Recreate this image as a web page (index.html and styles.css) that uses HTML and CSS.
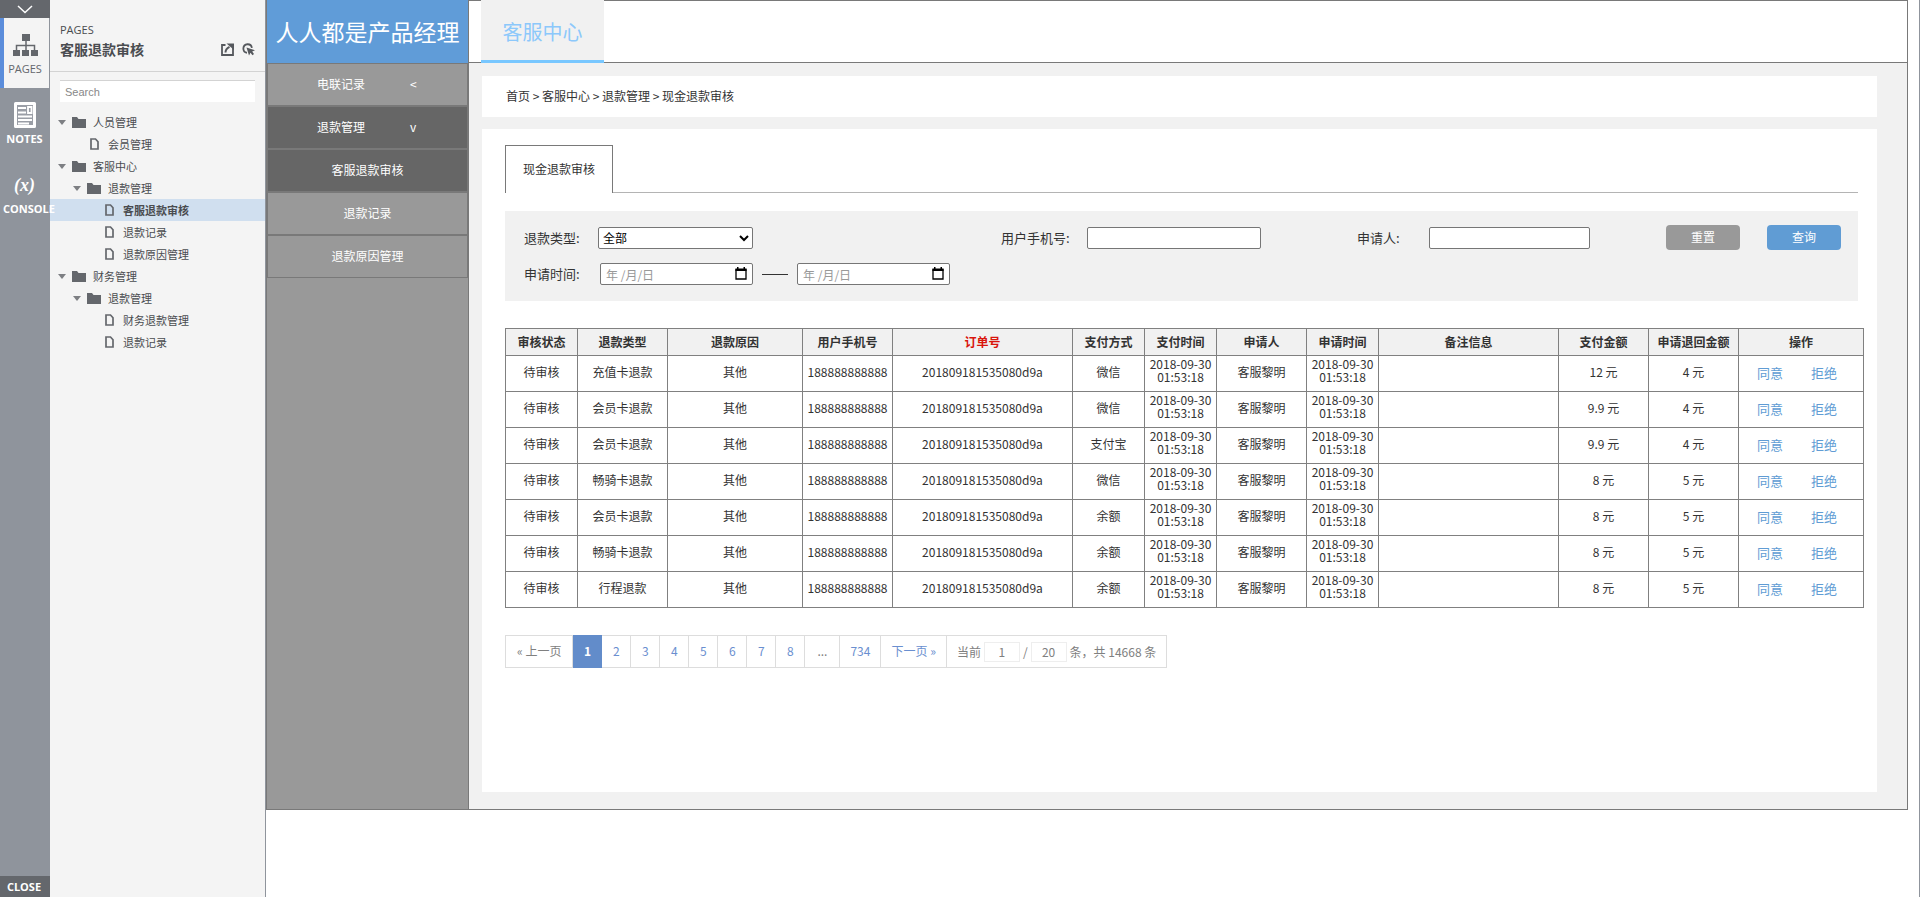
FILE: index.html
```html
<!DOCTYPE html>
<html lang="zh-CN">
<head>
    <meta charset="UTF-8">
    <meta name="viewport" content="width=device-width, initial-scale=1.0">
    <title>客服退款审核</title>
    <link rel="stylesheet" href="styles.css">
</head>
<body>
    <!-- shared icons -->
    <svg class="defs" width="0" height="0">
        <symbol id="i-arrow" viewBox="0 0 8 5"><path d="M0 0h8L4 5z" fill="#7d7f83"/></symbol>
        <symbol id="i-folder" viewBox="0 0 14 11"><path d="M0 0h5l1.500 2H14v9H0z" fill="#64676c"/></symbol>
        <symbol id="i-page" viewBox="0 0 9 12"><path d="M1 1h4.500L8 3.800V11H1z" fill="none" stroke="#64676c" stroke-width="1.700"/></symbol>
        <symbol id="i-calendar" viewBox="0 0 12 13"><path d="M1 3h10v9H1z" fill="none" stroke="#000" stroke-width="1.300"/><path d="M.4 1.500h11.200V4H.4zM2 0h1.500v2H2zM8.500 0H10v2H8.500z"/></symbol>
    </svg>

    <div class="player">
        <nav class="rail">
            <button class="rail-toggle" aria-label="Toggle">
                <svg width="16" height="9" viewBox="0 0 16 9"><path d="M1 1l7 6.500L15 1" fill="none" stroke="#fff" stroke-width="1.500"/></svg>
            </button>
            <button class="rail-item active">
                <span class="rail-icon">
                    <svg width="25" height="22" viewBox="0 0 25 22" fill="#64676c"><path d="M9 0h8v7H9zM0 16h7v6H0zM9 16h7v6H9zM18 16h7v6h-7z"/><path d="M13 7v9M3.500 16v-4.500h18V16" fill="none" stroke="#64676c" stroke-width="1.500"/></svg>
                </span>
                PAGES
            </button>
            <button class="rail-item">
                <span class="rail-icon">
                    <svg width="22" height="26" viewBox="0 0 22 26"><rect x="1.500" y="1.500" width="19" height="23" fill="#9a9ea6" stroke="#fff" stroke-width="3" stroke-linejoin="round"/><path d="M4 6h8M4 10.500h8M4 14.500h14M4 18h14M4 21.500h11" stroke="#fff" stroke-width="1.800"/><path d="M14 5h3.500v6H14z" fill="#9a9ea6" stroke="#fff" stroke-width="1.800"/></svg>
                </span>
                NOTES
            </button>
            <button class="rail-item">
                <span class="rail-icon rail-var">(x)</span>
                CONSOLE
            </button>
            <button class="rail-close">CLOSE</button>
        </nav>

        <aside class="sitemap">
            <div class="sitemap-head">
                <div class="sitemap-label">PAGES</div>
                <div class="sitemap-title">
                    <h1>客服退款审核</h1>
                    <svg width="13" height="13" viewBox="0 0 13 13"><path d="M4.500 2H1v10h11V3.500" fill="none" stroke="#55585d" stroke-width="1.800"/><path d="M4.500 9.500C4.500 6.500 6 5 8.500 3.800" fill="none" stroke="#55585d" stroke-width="2"/><path d="M5.500.5H13V7L10.500 4.800z" fill="#55585d"/></svg>
                    <svg width="13" height="13" viewBox="0 0 13 13"><path d="M5 9.800A4.300 4.300 0 1 1 9.900 4.800" fill="none" stroke="#55585d" stroke-width="1.800"/><path d="M4.500 4.500L13 7.300l-2.800 1.200 1.800 2.500-1.500 1.200-2-2.400L7 12.500z" fill="#55585d"/></svg>
                </div>
            </div>
            <input class="sitemap-search" type="text" placeholder="Search" aria-label="Search">
            <ul class="tree">
                <li><a class="lv1" href="#"><svg class="arrow"><use href="#i-arrow"/></svg><svg class="folder"><use href="#i-folder"/></svg>人员管理</a></li>
                <li><a class="lv2" href="#"><svg class="page"><use href="#i-page"/></svg>会员管理</a></li>
                <li><a class="lv1" href="#"><svg class="arrow"><use href="#i-arrow"/></svg><svg class="folder"><use href="#i-folder"/></svg>客服中心</a></li>
                <li><a class="lv2" href="#"><svg class="arrow"><use href="#i-arrow"/></svg><svg class="folder"><use href="#i-folder"/></svg>退款管理</a></li>
                <li><a class="lv3 selected" href="#"><svg class="page"><use href="#i-page"/></svg>客服退款审核</a></li>
                <li><a class="lv3" href="#"><svg class="page"><use href="#i-page"/></svg>退款记录</a></li>
                <li><a class="lv3" href="#"><svg class="page"><use href="#i-page"/></svg>退款原因管理</a></li>
                <li><a class="lv1" href="#"><svg class="arrow"><use href="#i-arrow"/></svg><svg class="folder"><use href="#i-folder"/></svg>财务管理</a></li>
                <li><a class="lv2" href="#"><svg class="arrow"><use href="#i-arrow"/></svg><svg class="folder"><use href="#i-folder"/></svg>退款管理</a></li>
                <li><a class="lv3" href="#"><svg class="page"><use href="#i-page"/></svg>财务退款管理</a></li>
                <li><a class="lv3" href="#"><svg class="page"><use href="#i-page"/></svg>退款记录</a></li>
            </ul>
        </aside>

        <div class="canvas">
            <div class="app">
                <aside class="menu">
                    <div class="brand">人人都是产品经理</div>
                    <a class="menu-item parent" href="#"><span>电联记录</span><span>&lt;</span></a>
                    <a class="menu-item parent dark" href="#"><span>退款管理</span><span>v</span></a>
                    <a class="menu-item dark" href="#">客服退款审核</a>
                    <a class="menu-item" href="#">退款记录</a>
                    <a class="menu-item" href="#">退款原因管理</a>
                </aside>

                <div class="content">
                    <header class="topbar"><a class="topbar-tab" href="#">客服中心</a></header>

                    <main class="main">
                        <div class="card breadcrumb">首页 &gt; 客服中心 &gt; 退款管理 &gt; 现金退款审核</div>

                        <section class="card panel">
                            <div class="tabs"><a class="tab" href="#">现金退款审核</a></div>

                            <form class="filters">
                                <div class="field">
                                    <label for="type">退款类型:</label>
                                    <select id="type"><option>全部</option></select>
                                </div>
                                <div class="field phone">
                                    <label for="phone">用户手机号:</label>
                                    <input type="text" id="phone">
                                </div>
                                <div class="field person">
                                    <label for="person">申请人:</label>
                                    <input type="text" id="person">
                                </div>
                                <div class="actions">
                                    <button type="reset" class="btn">重置</button>
                                    <button type="button" class="btn primary">查询</button>
                                </div>
                                <div class="field range">
                                    <label for="from">申请时间:</label>
                                    <span class="date"><input type="text" id="from" placeholder="年 /月/日"><svg><use href="#i-calendar"/></svg></span>
                                    <span class="dash"></span>
                                    <span class="date"><input type="text" aria-label="结束时间" placeholder="年 /月/日"><svg><use href="#i-calendar"/></svg></span>
                                </div>
                            </form>

                            <table class="list">
                                <colgroup>
                                    <col class="w72"><col class="w90"><col class="w135"><col class="w90"><col class="w180"><col class="w72"><col class="w72"><col class="w90"><col class="w72"><col class="w180"><col class="w90"><col class="w90"><col class="w125">
                                </colgroup>
                                <thead>
                                    <tr><th>审核状态</th><th>退款类型</th><th>退款原因</th><th>用户手机号</th><th class="red">订单号</th><th>支付方式</th><th>支付时间</th><th>申请人</th><th>申请时间</th><th>备注信息</th><th>支付金额</th><th>申请退回金额</th><th>操作</th></tr>
                                </thead>
                                <tbody>
                                    <tr><td>待审核</td><td>充值卡退款</td><td>其他</td><td>188888888888</td><td>201809181535080d9a</td><td>微信</td><td class="time">2018-09-30 01:53:18</td><td>客服黎明</td><td class="time">2018-09-30 01:53:18</td><td></td><td>12 元</td><td>4 元</td><td class="ops"><a href="#">同意</a><a href="#">拒绝</a></td></tr>
                                    <tr><td>待审核</td><td>会员卡退款</td><td>其他</td><td>188888888888</td><td>201809181535080d9a</td><td>微信</td><td class="time">2018-09-30 01:53:18</td><td>客服黎明</td><td class="time">2018-09-30 01:53:18</td><td></td><td>9.9 元</td><td>4 元</td><td class="ops"><a href="#">同意</a><a href="#">拒绝</a></td></tr>
                                    <tr><td>待审核</td><td>会员卡退款</td><td>其他</td><td>188888888888</td><td>201809181535080d9a</td><td>支付宝</td><td class="time">2018-09-30 01:53:18</td><td>客服黎明</td><td class="time">2018-09-30 01:53:18</td><td></td><td>9.9 元</td><td>4 元</td><td class="ops"><a href="#">同意</a><a href="#">拒绝</a></td></tr>
                                    <tr><td>待审核</td><td>畅骑卡退款</td><td>其他</td><td>188888888888</td><td>201809181535080d9a</td><td>微信</td><td class="time">2018-09-30 01:53:18</td><td>客服黎明</td><td class="time">2018-09-30 01:53:18</td><td></td><td>8 元</td><td>5 元</td><td class="ops"><a href="#">同意</a><a href="#">拒绝</a></td></tr>
                                    <tr><td>待审核</td><td>会员卡退款</td><td>其他</td><td>188888888888</td><td>201809181535080d9a</td><td>余额</td><td class="time">2018-09-30 01:53:18</td><td>客服黎明</td><td class="time">2018-09-30 01:53:18</td><td></td><td>8 元</td><td>5 元</td><td class="ops"><a href="#">同意</a><a href="#">拒绝</a></td></tr>
                                    <tr><td>待审核</td><td>畅骑卡退款</td><td>其他</td><td>188888888888</td><td>201809181535080d9a</td><td>余额</td><td class="time">2018-09-30 01:53:18</td><td>客服黎明</td><td class="time">2018-09-30 01:53:18</td><td></td><td>8 元</td><td>5 元</td><td class="ops"><a href="#">同意</a><a href="#">拒绝</a></td></tr>
                                    <tr><td>待审核</td><td>行程退款</td><td>其他</td><td>188888888888</td><td>201809181535080d9a</td><td>余额</td><td class="time">2018-09-30 01:53:18</td><td>客服黎明</td><td class="time">2018-09-30 01:53:18</td><td></td><td>8 元</td><td>5 元</td><td class="ops"><a href="#">同意</a><a href="#">拒绝</a></td></tr>
                                </tbody>
                            </table>

                            <div class="pager">
                                <a class="prev" href="#">« 上一页</a>
                                <a class="current" href="#">1</a>
                                <a href="#">2</a>
                                <a href="#">3</a>
                                <a href="#">4</a>
                                <a href="#">5</a>
                                <a href="#">6</a>
                                <a href="#">7</a>
                                <a href="#">8</a>
                                <span class="more">...</span>
                                <a href="#">734</a>
                                <a href="#">下一页 »</a>
                                <div class="pager-info">
                                    <label for="pageNo">当前</label>
                                    <input type="text" id="pageNo" value="1">
                                    <span>/</span>
                                    <input type="text" value="20" aria-label="每页条数">
                                    <span>条，共 14668 条</span>
                                </div>
                            </div>
                        </section>
                    </main>
                </div>
            </div>
        </div>
    </div>
</body>
</html>
```

FILE: styles.css
```css
* {
    box-sizing: border-box;
}

body {
    margin: 0;
    font-family: "Noto Sans CJK SC", sans-serif;
    font-size: 12px;
    line-height: 18px;
    color: #333;
    background-color: #fff;
}

a {
    color: inherit;
    text-decoration: none;
}

button,
input,
select {
    font-family: inherit;
    font-size: inherit;
}

.defs {
    position: absolute;
}

.player {
    display: flex;
    min-height: 100vh;
}

/* Left rail */
.rail {
    position: relative;
    z-index: 1;
    display: flex;
    flex-direction: column;
    flex: none;
    width: 50px;
    background-color: #8f949c;
}

.rail button {
    border: none;
    padding: 0;
    color: #fff;
    background: none;
    font: bold 11px/14px "Open Sans", sans-serif;
    cursor: pointer;
}

.rail .rail-toggle {
    display: flex;
    align-items: center;
    justify-content: center;
    height: 18px;
    background-color: #64676c;
}

.rail .rail-item {
    display: flex;
    flex-direction: column;
    align-items: safe center;
    height: 70px;
    padding: 11px 4px 0 3px;
}

.rail .rail-item.active {
    margin-right: 1px;
    padding: 11px 3px 0 0;
    border-left: 4px solid #5b8ddb;
    background-color: #f4f4f4;
    color: #64676c;
    font-weight: normal;
}

.rail-icon {
    display: flex;
    align-items: center;
    align-self: center;
    height: 33px;
    padding-bottom: 2px;
}

.rail-var {
    font: italic bold 18px/18px "Liberation Serif", serif;
}

.rail .rail-close {
    height: 21px;
    margin-top: auto;
    padding-right: 2px;
    background-color: #64676c;
}

/* Page tree */
.sitemap {
    flex: none;
    width: 216px;
    border-right: 1px solid #8f949c;
    background-color: #f4f4f4;
    color: #4a4c50;
}

.sitemap-head {
    padding: 21px 10px 12px;
    border-bottom: 1px solid #d3d3d3;
}

.sitemap-label {
    font: 11px/18px "Open Sans", sans-serif;
}

.sitemap-title {
    display: flex;
    align-items: center;
    gap: 8px;
}

.sitemap-title h1 {
    flex: 1;
    margin: 0;
    font-size: 14px;
    line-height: 20px;
}

.sitemap-search {
    display: block;
    width: 195px;
    height: 22px;
    margin: 8px 10px 9px;
    padding: 0 5px;
    border: none;
    border-top: 1px solid #d3d3d3;
    background-color: #fff;
    font: 11px "Liberation Sans", sans-serif;
}

.sitemap-search::placeholder {
    color: #888;
}

.tree {
    margin: 0;
    padding: 0;
    list-style: none;
    font-size: 11px;
}

.tree a {
    display: flex;
    align-items: center;
    height: 22px;
}

.tree .lv1 {
    padding-left: 8px;
}

.tree .lv2 {
    padding-left: 23px;
}

.tree .lv3 {
    padding-left: 38px;
}

.tree .selected {
    background-color: #d0dfef;
    font-weight: bold;
}

.tree .arrow {
    width: 8px;
    height: 5px;
    margin-right: 6px;
}

.tree .folder {
    width: 14px;
    height: 11px;
    margin-right: 7px;
}

.tree .page {
    width: 9px;
    height: 12px;
    margin: 0 9px 0 17px;
}

/* Prototype canvas */
.canvas {
    flex: 1;
    min-width: 0;
    padding-right: 11px;
    border-right: 1px solid #8f949c;
}

.app {
    display: flex;
    border: 1px solid #797979;
    border-top: none;
    background-color: #f1f1f1;
}

.menu {
    flex: none;
    width: 202px;
    border-right: 1px solid #797979;
    background-color: #999;
    color: #fff;
}

.brand {
    height: 63px;
    line-height: 62px;
    background-color: #609cd8;
    font-size: 23px;
    text-align: center;
}

.menu-item {
    display: flex;
    align-items: center;
    justify-content: center;
    height: 43px;
    padding-bottom: 2px;
    border: 1px solid #797979;
}

.menu-item.parent {
    justify-content: flex-start;
    gap: 45px;
    padding-left: 49px;
}

.menu-item.dark {
    background-color: #666;
}

.content {
    flex: 1;
    min-width: 0;
}

.topbar {
    display: flex;
    height: 63px;
    padding-left: 12px;
    border-top: 1px solid #797979;
    border-bottom: 1px solid #797979;
    background-color: #fff;
}

.topbar-tab {
    width: 123px;
    margin: -1px 0;
    border-bottom: 3px solid #78c7ff;
    background-color: #f1f1f1;
    color: #8cc8fb;
    font-size: 20px;
    line-height: 63px;
    text-align: center;
}

.main {
    padding: 13px 30px 17px 13px;
}

.card {
    background-color: #fff;
}

.breadcrumb {
    margin-bottom: 12px;
    padding: 11px 24px 12px;
}

.panel {
    min-height: 663px;
    padding: 16px 14px 16px 23px;
}

.tabs {
    display: flex;
    margin-right: 5px;
    border-bottom: 1px solid #b4b4b4;
}

.tab {
    width: 108px;
    height: 48px;
    margin-bottom: -1px;
    border: 1px solid #797979;
    border-bottom: none;
    background-color: #fff;
    line-height: 45px;
    text-align: center;
}

/* Search form */
.filters {
    display: grid;
    grid-template-columns: 477fr 356fr 309fr 175px;
    row-gap: 13px;
    margin: 18px 5px 27px 0;
    padding: 14px 17px 16px 19px;
    background-color: #f1f1f1;
    font-size: 13px;
}

.field {
    display: flex;
    align-items: center;
}

.field label {
    flex: none;
    width: 74px;
}

.field input,
.field select {
    width: 155px;
    height: 22px;
    padding: 0 8px 0 5px;
    border: 1px solid #767676;
    border-radius: 2px;
    background-color: #fff;
}

.field select {
    padding: 0;
    color: #000;
    font-size: 12px;
}

.field.phone label {
    width: 86px;
}

.field.phone input {
    width: 174px;
}

.field.person label {
    width: 72px;
}

.field.person input {
    width: 161px;
}

.field.range {
    grid-column: 1 / -1;
}

.field.range label {
    width: 76px;
}

.date {
    position: relative;
}

.date input {
    display: block;
    width: 153px;
    font-size: 12px;
}

.date input::placeholder {
    color: #999;
}

.date svg {
    position: absolute;
    top: 4px;
    right: 6px;
    width: 12px;
    height: 13px;
}

.dash {
    width: 26px;
    height: 1px;
    margin: 0 9px;
    background-color: #333;
}

.actions {
    display: flex;
    justify-content: space-between;
}

.btn {
    width: 74px;
    height: 25px;
    padding: 0 0 2px;
    border: none;
    border-radius: 4px;
    background-color: #999;
    color: #fff;
    font-size: 12px;
    cursor: pointer;
}

.btn.primary {
    background-color: #609cd4;
}

/* Refund list */
.list {
    width: 100%;
    table-layout: fixed;
    border-collapse: collapse;
    line-height: 13px;
    text-align: center;
}

.list th,
.list td {
    padding: 0 4px 4px;
    border: 1px solid #808080;
}

.list th {
    height: 27px;
    padding-bottom: 2px;
    background-color: #f1f1f1;
}

.list td {
    height: 36px;
}

.list .time {
    padding-bottom: 8px;
}

.list .red {
    color: #d9150c;
}

.list .ops {
    padding-right: 12px;
    padding-bottom: 2px;
    color: #609cd4;
    font-size: 13px;
}

.ops a + a {
    margin-left: 28px;
}

.w72 {
    width: 72px;
}

.w90 {
    width: 90px;
}

.w125 {
    width: 125px;
}

.w135 {
    width: 135px;
}

.w180 {
    width: 180px;
}

/* Pagination */
.pager {
    display: inline-flex;
    height: 33px;
    margin-top: 27px;
    border: 1px solid #ddd;
    color: #6a8fd0;
    line-height: 29px;
}

.pager > a,
.pager > .more {
    min-width: 29px;
    padding: 0 10px;
    border-right: 1px solid #ddd;
    text-align: center;
}

.pager > .prev,
.pager > .more,
.pager-info {
    color: #808080;
}

.pager > .prev {
    padding: 0 11px;
}

.pager > .more {
    padding: 0 12px;
}

.pager > .current {
    margin: -1px 0;
    border-color: #628cca;
    background-color: #628cca;
    color: #fff;
    font-weight: bold;
    line-height: 31px;
}

.pager-info {
    display: flex;
    align-items: center;
    gap: 3px;
    padding: 0 10px;
}

.pager-info input {
    width: 36px;
    height: 20px;
    padding: 0;
    border: 1px solid #eee;
    color: #808080;
    text-align: center;
}
```
